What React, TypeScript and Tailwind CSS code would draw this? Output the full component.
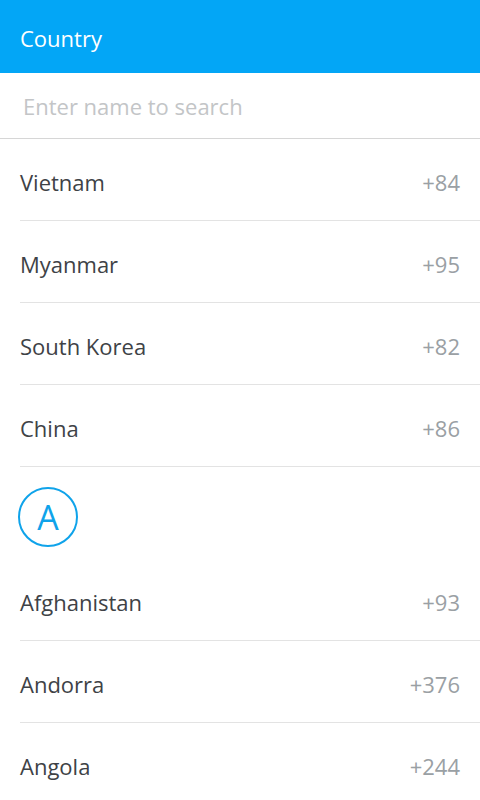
import { useState } from 'react';

type Country = { name: string; code: string };

const top: Country[] = [
  { name: 'Vietnam', code: '+84' },
  { name: 'Myanmar', code: '+95' },
  { name: 'South Korea', code: '+82' },
  { name: 'China', code: '+86' },
];

const groupA: Country[] = [
  { name: 'Afghanistan', code: '+93' },
  { name: 'Andorra', code: '+376' },
  { name: 'Angola', code: '+244' },
];

function Row({ c }: { c: Country }) {
  return (
    <div className="ml-5 flex h-[82px] items-center justify-between border-b border-[#e3e3e3] pr-5 pt-[5px]">
      <span className="text-[22px] text-[#3e4246]">{c.name}</span>
      <span className="text-[22px] text-[#9aa0a4]">{c.code}</span>
    </div>
  );
}

export default function App() {
  const [query, setQuery] = useState('');

  return (
    <div
      className="h-[800px] w-[480px] overflow-hidden bg-white"
      style={{ fontFamily: '"Open Sans", "Noto Sans", sans-serif' }}
    >
      <header className="flex h-[73px] items-center bg-[#03a6f6] px-5 pt-[3px]">
        <h1 className="text-[22px] font-normal text-white">Country</h1>
      </header>

      <div className="flex h-[66px] items-center border-b border-[#d6d6d6] px-[23px] pt-[2px]">
        <input
          value={query}
          onChange={(e) => setQuery(e.target.value)}
          placeholder="Enter name to search"
          className="w-full bg-transparent text-[22px] text-[#333] outline-none placeholder:text-[#c3c5c7]"
        />
      </div>

      {top.map((c) => (
        <Row key={c.name} c={c} />
      ))}

      {/* letter header */}
      <div className="h-[92px] pl-[18px] pt-5">
        <div className="flex h-[60px] w-[60px] items-center justify-center rounded-full border-2 border-[#0fa3ea]">
          <span className="text-[34px] leading-none text-[#0fa3ea]">A</span>
        </div>
      </div>

      {groupA.map((c) => (
        <Row key={c.name} c={c} />
      ))}
    </div>
  );
}
